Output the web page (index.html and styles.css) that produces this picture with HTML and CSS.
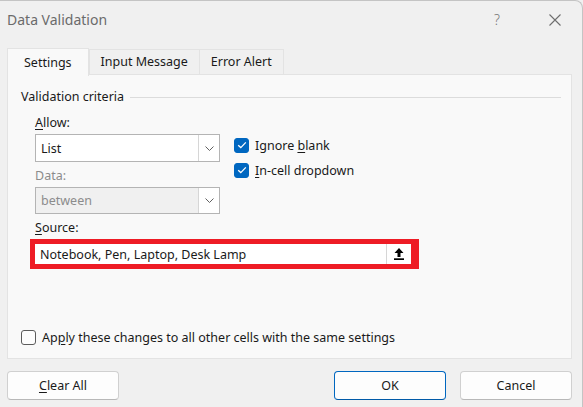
FILE: index.html
```html
<!DOCTYPE html>
<html>
<head>
<meta charset="utf-8">
<link rel="stylesheet" href="styles.css">
</head>
<body>
<div class="window">
  <div class="titlebar">
    <span class="title">Data Validation</span>
    <span class="help">?</span>
    <svg class="close" width="12" height="12" viewBox="0 0 12 12"><path d="M0.5 0.5L11.5 11.5M11.5 0.5L0.5 11.5" stroke="#6e6e6e" stroke-width="1.1" fill="none"/></svg>
  </div>
  <div class="tabs">
    <div class="tab active">Settings</div>
    <div class="tab">Input Message</div>
    <div class="tab">Error Alert</div>
  </div>
  <div class="panel">
    <div class="legend"><span>Validation criteria</span><span class="rule"></span></div>
    <div class="criteria">
      <div class="lbl lbl-first"><u>A</u>llow:</div>
      <div class="select"><span class="value">List</span><span class="dd"><svg width="9" height="5" viewBox="0 0 9 5"><path d="M0.5 0.5L4.5 4.5L8.5 0.5" stroke="#606060" fill="none"/></svg></span></div>
      <div class="checks">
        <div class="check"><span class="box on"><svg width="10" height="8" viewBox="0 0 10 8"><path d="M1.2 4.2L3.8 6.6L8.8 1.4" stroke="#fff" stroke-width="1.3" fill="none"/></svg></span><span>Ignore <u>b</u>lank</span></div>
        <div class="check"><span class="box on"><svg width="10" height="8" viewBox="0 0 10 8"><path d="M1.2 4.2L3.8 6.6L8.8 1.4" stroke="#fff" stroke-width="1.3" fill="none"/></svg></span><span><u>I</u>n-cell dropdown</span></div>
      </div>
      <div class="lbl disabled">Data:</div>
      <div class="select off"><span class="value">between</span><span class="dd"><svg width="9" height="5" viewBox="0 0 9 5"><path d="M0.5 0.5L4.5 4.5L8.5 0.5" stroke="#606060" fill="none"/></svg></span></div>
      <div class="lbl"><u>S</u>ource:</div>
      <div class="source">
        <div class="src-input"><span class="value">Notebook, Pen, Laptop, Desk Lamp</span><span class="upload"><svg width="10" height="12" viewBox="0 0 10 12"><path d="M5 0L0.5 5H3.5V9H6.5V5H9.5Z" fill="#000"/><rect x="0" y="10.3" width="10" height="1.7" fill="#000"/></svg></span></div>
      </div>
    </div>
    <div class="apply"><span class="box"></span><span>Ap<u>p</u>ly these changes to all other cells with the same settings</span></div>
  </div>
  <div class="buttons">
    <div class="btn"><u>C</u>lear All</div>
    <div class="btn-group">
      <div class="btn primary">OK</div>
      <div class="btn">Cancel</div>
    </div>
  </div>
</div>
</body>
</html>
```
FILE: styles.css
```css
* { box-sizing: border-box; }
html, body { margin: 0; padding: 0; }
body {
  width: 583px;
  height: 407px;
  overflow: hidden;
  font-family: "Noto Sans", "Open Sans", sans-serif;
  font-size: 12.5px;
  color: #1a1a1a;
  background: #f0f0f0;
}
u { text-decoration: underline; text-underline-offset: 2px; }
.window {
  width: 583px;
  height: 407px;
  background: #f0f0f0;
  border-top: 1px solid #c4c4c4;
  border-right: 1px solid #c4c4c4;
  border-top-right-radius: 8px;
}
.titlebar {
  height: 46px;
  display: flex;
  align-items: flex-start;
  padding-top: 9px;
  padding-left: 7px;
}
.title {
  font-size: 14px;
  line-height: 20px;
  color: #6b6b6b;
  flex: 1;
}
.help {
  font-size: 14px;
  line-height: 20px;
  color: #777;
  font-weight: 300;
  margin-right: 49px;
}
.close { margin-top: 4px; margin-right: 21px; }
.tabs {
  display: flex;
  align-items: flex-end;
  height: 28px;
  margin-left: 7px;
}
.tab {
  height: 25px;
  line-height: 23px;
  padding: 0 11px;
  border: 1px solid #e3e3e3;
  border-bottom: none;
  background: #f0f0f0;
  margin-bottom: 1px;
}
.tab.active {
  height: 28px;
  line-height: 27px;
  padding: 0 16px;
  background: #f9f9f9;
  margin-bottom: -1px;
  position: relative;
  z-index: 1;
}
.tab + .tab { margin-left: -1px; }
.tab.active + .tab { margin-left: 0; }
.panel {
  margin-left: 7px;
  margin-top: -1px;
  width: 565px;
  height: 285px;
  background: #f9f9f9;
  border: 1px solid #e3e3e3;
  display: flex;
  flex-direction: column;
  padding: 14px 10px 13px 13px;
}
.legend {
  display: flex;
  align-items: center;
  height: 16px;
  line-height: 16px;
  gap: 6px;
}
.rule { flex: 1; height: 1px; background: #dcdcdc; }
.criteria {
  padding-left: 14px;
  display: grid;
  grid-template-columns: 185px auto;
  column-gap: 14px;
  align-items: start;
}
.lbl { grid-column: 1; line-height: 16px; margin-top: 6px; margin-bottom: 3px; }
.lbl-first { margin-top: 10px; }
.lbl.disabled { color: #8c8c8c; }
.select {
  grid-column: 1;
  width: 185px;
  height: 28px;
  border: 1px solid #b4b4b4;
  background: #fff;
  display: flex;
  align-items: center;
}
.select.off { height: 27px; background: #f0f0f0; color: #8c8c8c; }
.select .value { flex: 1; padding-left: 5px; }
.dd {
  width: 21px;
  height: 100%;
  border-left: 1px solid #d6d6d6;
  background: #fff;
  display: flex;
  align-items: center;
  justify-content: center;
}
.checks {
  grid-column: 2;
  grid-row: 2 / span 3;
  display: flex;
  flex-direction: column;
  gap: 9px;
  margin-top: 3px;
}
.check { display: flex; align-items: center; gap: 6px; height: 16px; }
.box {
  width: 15px;
  height: 15px;
  border-radius: 3px;
  display: flex;
  align-items: center;
  justify-content: center;
  border: 1px solid #5c5c5c;
  background: #fdfdfd;
  flex: none;
}
.box.on { background: #0067c0; border-color: #0067c0; }
.source {
  grid-column: 1 / span 2;
  margin-left: -5px;
  margin-top: 0;
  width: 389px;
  height: 30px;
  border: 5px solid #ee1c25;
  border-right-width: 8px;
}
.src-input {
  height: 100%;
  background: #fff;
  display: flex;
  align-items: center;
}
.src-input .value { flex: 1; padding-left: 5px; }
.upload {
  width: 25px;
  height: 100%;
  border-left: 1px solid #d6d6d6;
  display: flex;
  align-items: center;
  justify-content: center;
}
.apply {
  margin-top: auto;
  display: flex;
  align-items: center;
  gap: 6px;
  height: 16px;
}
.buttons {
  display: flex;
  justify-content: space-between;
  margin-top: 12px;
  padding-left: 7px;
  padding-right: 10px;
}
.btn-group { display: flex; gap: 14px; }
.btn {
  width: 112px;
  height: 29px;
  line-height: 27px;
  text-align: center;
  background: #fdfdfd;
  border: 1px solid #d0d0d0;
  border-bottom-color: #b8b8b8;
  border-radius: 4px;
}
.btn.primary { border-color: #0067c0; border-bottom-color: #005aa8; }
```
